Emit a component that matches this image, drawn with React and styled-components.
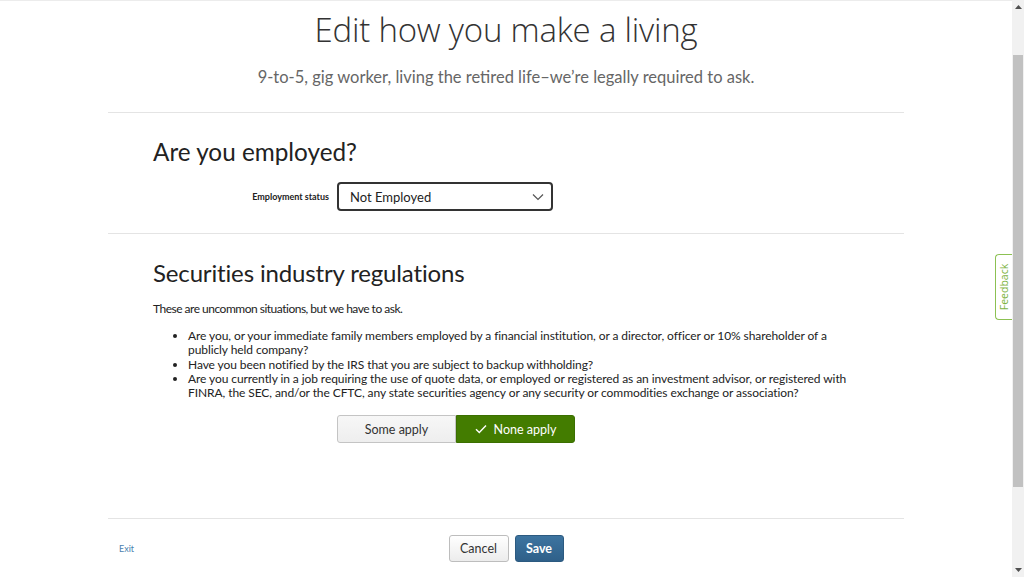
import React from "react";
import styled, { createGlobalStyle } from "styled-components";

const GlobalStyle = createGlobalStyle`
  html, body {
    margin: 0;
    padding: 0;
    overflow: hidden;
    background: #fff;
  }
  body {
    font-family: "Lato", "Open Sans", sans-serif;
    color: #222;
  }
`;

const Viewport = styled.div`
  display: flex;
  height: 577px;
  width: 1024px;
`;

const Page = styled.div`
  position: relative;
  flex: 1;
  display: flex;
  flex-direction: column;
  border-top: 1px solid #ececec;
  box-sizing: border-box;
`;

const Header = styled.header`
  display: flex;
  flex-direction: column;
  align-items: center;
  padding: 9px 0 19px;
`;

const Title = styled.h1`
  margin: 0;
  font-family: "Open Sans", sans-serif;
  font-weight: 300;
  font-size: 33px;
  line-height: 40px;
  color: #333;
  letter-spacing: -0.2px;
`;

const Subtitle = styled.p`
  margin: 17px 0 0;
  font-size: 16.5px;
  line-height: 20px;
  color: #666;
  height: 26px;
`;

const Section = styled.section`
  width: 796px;
  margin: 0 auto;
  border-top: 1px solid #e4e4e4;
  box-sizing: border-box;
  padding: ${({ $pad }) => $pad};
`;

const SectionTitle = styled.h2`
  margin: 0;
  font-weight: 400;
  font-size: ${({ $size }) => $size};
  line-height: 30px;
  color: #222;
  letter-spacing: ${({ $ls }) => $ls || "0"};
`;

const FormRow = styled.div`
  display: grid;
  grid-template-columns: 176px auto;
  justify-content: start;
  column-gap: 8px;
  align-items: center;
  margin-top: ${({ $top }) => $top};
`;

const Label = styled.label`
  font-size: 9px;
  font-weight: 700;
  text-align: right;
  color: #222;
`;

const Select = styled.div`
  width: 216px;
  height: 29px;
  box-sizing: border-box;
  border: 2px solid #333;
  border-radius: 4px;
  display: flex;
  align-items: center;
  justify-content: space-between;
  padding: 0 7px 0 11px;
  font-size: 13px;
  color: #222;
`;

const Intro = styled.p`
  margin: 13px 0 0;
  font-size: 12px;
  line-height: 16px;
  letter-spacing: -0.5px;
  color: #222;
`;

const List = styled.ul`
  margin: 12px 0 0;
  padding-left: 35px;
  font-size: 12px;
  line-height: 14.3px;
  letter-spacing: -0.08px;
  color: #222;
`;

const Toggle = styled.div`
  display: flex;
  grid-column: 2;
`;

const ToggleButton = styled.button`
  width: 119px;
  height: 28px;
  box-sizing: border-box;
  font-family: "Lato", sans-serif;
  font-size: 12.5px;
  display: flex;
  align-items: center;
  justify-content: center;
  gap: 7px;
  border: 1px solid ${({ $on }) => ($on ? "#3b6f00" : "#c4c4c4")};
  background: ${({ $on }) =>
    $on ? "#437c00" : "linear-gradient(#f7f7f7, #eeeeee)"};
  color: ${({ $on }) => ($on ? "#fff" : "#333")};
  border-radius: ${({ $on }) => ($on ? "0 3px 3px 0" : "3px 0 0 3px")};
  padding: 0;
`;

const Spacer = styled.div`
  flex: 1;
`;

const Footer = styled.footer`
  width: 796px;
  margin: 0 auto;
  border-top: 1px solid #e4e4e4;
  box-sizing: border-box;
  display: grid;
  grid-template-columns: 1fr auto 1fr;
  align-items: center;
  height: 59px;
`;

const ExitLink = styled.a`
  font-size: 9px;
  color: #4a7fae;
  padding-left: 11px;
  text-decoration: none;
`;

const Actions = styled.div`
  display: flex;
  gap: 6px;
`;

const ActionButton = styled.button`
  height: 27px;
  box-sizing: border-box;
  border-radius: 3px;
  font-family: "Lato", sans-serif;
  font-size: 12.5px;
  padding: 0;
  width: ${({ $w }) => $w};
  border: 1px solid ${({ $primary }) => ($primary ? "#2c5a80" : "#bdbdbd")};
  background: ${({ $primary }) =>
    $primary
      ? "linear-gradient(#3d74a0, #2f6089)"
      : "linear-gradient(#ffffff, #ececec)"};
  color: ${({ $primary }) => ($primary ? "#fff" : "#333")};
  font-weight: ${({ $primary }) => ($primary ? 700 : 400)};
`;

const Feedback = styled.div`
  position: absolute;
  right: 0;
  top: 253px;
  width: 16px;
  height: 64px;
  border: 1px solid #8cc152;
  border-right: none;
  border-radius: 4px 0 0 4px;
  background: #fff;
  display: flex;
  align-items: center;
  justify-content: center;
  span {
    transform: rotate(-90deg);
    font-family: "Open Sans", sans-serif;
    font-size: 10.5px;
    color: #7cb342;
    white-space: nowrap;
  }
`;

const Scrollbar = styled.div`
  width: 12px;
  background: #f1f1f1;
  display: flex;
  flex-direction: column;
  align-items: center;
`;

const ScrollArrow = styled.div`
  height: 14px;
  display: flex;
  align-items: center;
  justify-content: center;
`;

const ScrollTrack = styled.div`
  flex: 1;
  width: 100%;
  padding: 41px 1px 76px;
  box-sizing: border-box;
  display: flex;
`;

const Thumb = styled.div`
  flex: 1;
  background: #c1c1c1;
`;

const Chevron = () => (
  <svg width="12" height="8" viewBox="0 0 12 8">
    <path d="M1 1.5 L6 6.5 L11 1.5" fill="none" stroke="#555" strokeWidth="1.2" />
  </svg>
);

const Check = () => (
  <svg width="12" height="10" viewBox="0 0 12 10">
    <path d="M1 5.2 L4.3 8.5 L11 1.5" fill="none" stroke="#fff" strokeWidth="1.4" />
  </svg>
);

const Tri = ({ up }) => (
  <svg width="7" height="4" viewBox="0 0 7 4">
    <path d={up ? "M0 4 L3.5 0 L7 4 Z" : "M0 0 L3.5 4 L7 0 Z"} fill="#505050" />
  </svg>
);

const questions = [
  "Are you, or your immediate family members employed by a financial institution, or a director, officer or 10% shareholder of a publicly held company?",
  "Have you been notified by the IRS that you are subject to backup withholding?",
  "Are you currently in a job requiring the use of quote data, or employed or registered as an investment advisor, or registered with FINRA, the SEC, and/or the CFTC, any state securities agency or any security or commodities exchange or association?",
];

export default function App() {
  return (
    <>
      <GlobalStyle />
      <Viewport>
        <Page>
          <Header>
            <Title>Edit how you make a living</Title>
            <Subtitle>
              9-to-5, gig worker, living the retired life–we’re legally required to ask.
            </Subtitle>
          </Header>

          <Section $pad="24px 45px 22px">
            <SectionTitle $size="24.3px">Are you employed?</SectionTitle>
            <FormRow $top="15px">
              <Label>Employment status</Label>
              <Select>
                Not Employed
                <Chevron />
              </Select>
            </FormRow>
          </Section>

          <Section $pad="24px 45px 0">
            <SectionTitle $size="24px" $ls="-0.15px">
              Securities industry regulations
            </SectionTitle>
            <Intro>These are uncommon situations, but we have to ask.</Intro>
            <List>
              {questions.map((q) => (
                <li key={q}>{q}</li>
              ))}
            </List>
            <FormRow $top="15px">
              <Toggle>
                <ToggleButton>Some apply</ToggleButton>
                <ToggleButton $on>
                  <Check />
                  None apply
                </ToggleButton>
              </Toggle>
            </FormRow>
          </Section>

          <Spacer />

          <Footer>
            <ExitLink href="#">Exit</ExitLink>
            <Actions>
              <ActionButton $w="60px">Cancel</ActionButton>
              <ActionButton $primary $w="49px">
                Save
              </ActionButton>
            </Actions>
            <div />
          </Footer>

          <Feedback>
            <span>Feedback</span>
          </Feedback>
        </Page>
        <Scrollbar>
          <ScrollArrow>
            <Tri up />
          </ScrollArrow>
          <ScrollTrack>
            <Thumb />
          </ScrollTrack>
          <ScrollArrow>
            <Tri />
          </ScrollArrow>
        </Scrollbar>
      </Viewport>
    </>
  );
}
